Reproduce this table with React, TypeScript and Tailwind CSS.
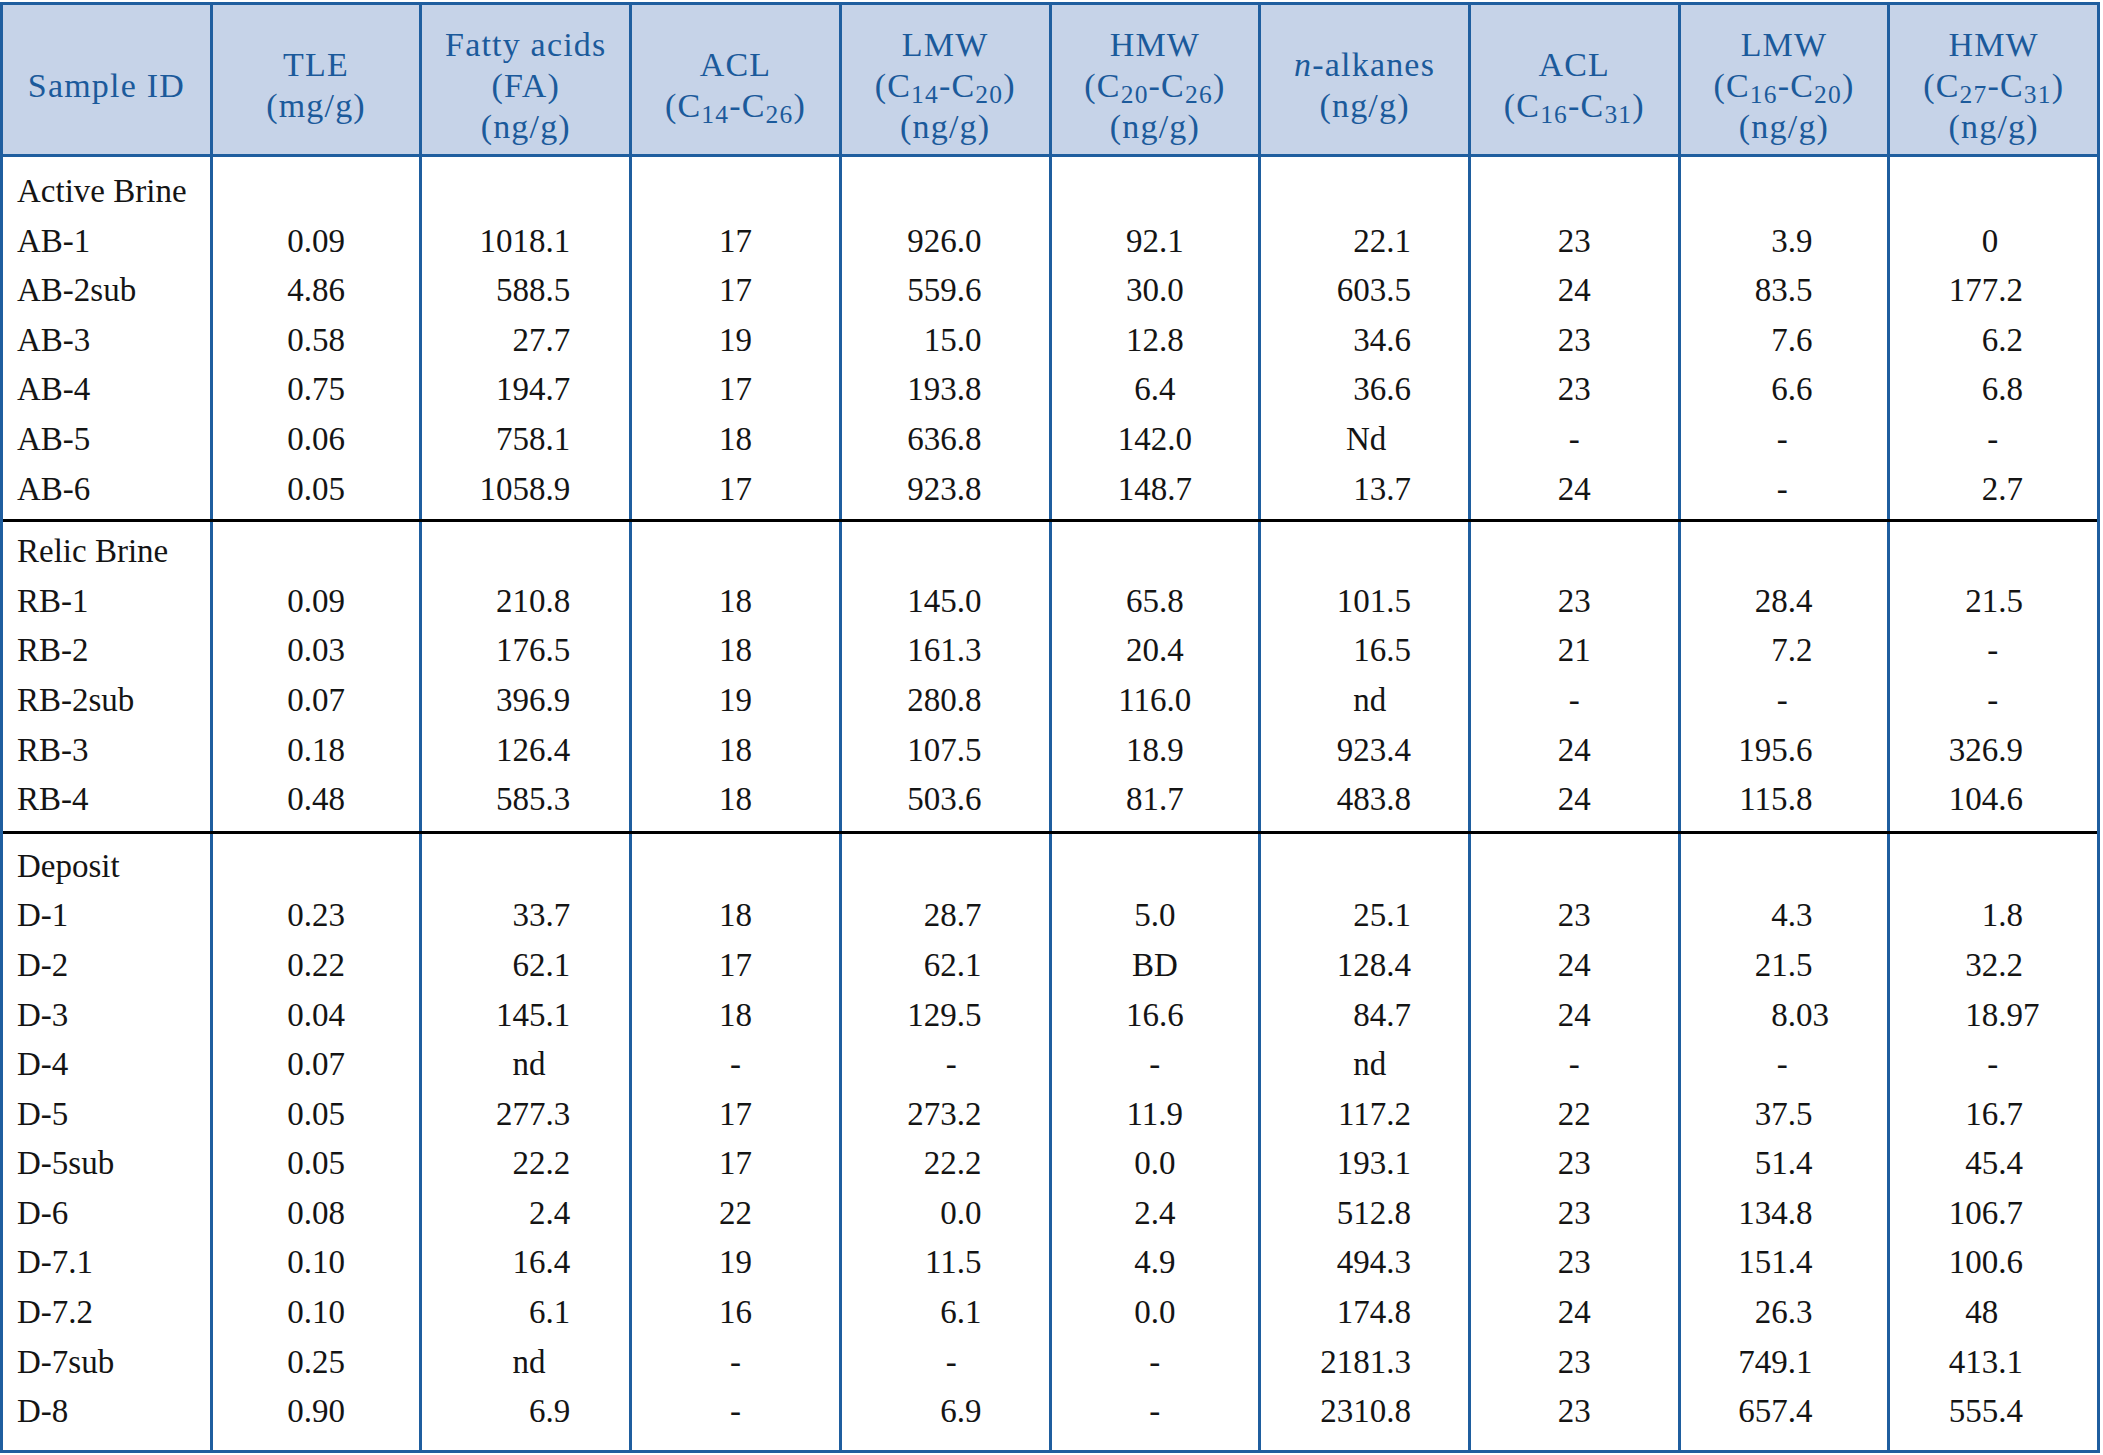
import React from 'react';

type Col =
  | { kind: 'left' }
  | { kind: 'center' }
  | { kind: 'dec'; w: string };

const COLS: Col[] = [
  { kind: 'left' },
  { kind: 'center' },
  { kind: 'dec', w: 'w-[123px]' },
  { kind: 'center' },
  { kind: 'dec', w: 'w-[115px]' },
  { kind: 'center' },
  { kind: 'dec', w: 'w-[125px]' },
  { kind: 'center' },
  { kind: 'dec', w: 'w-[107px]' },
  { kind: 'dec', w: 'w-[108px]' },
];

type Group = { label: string; pt: string; pb: string; rows: string[][] };

const GROUPS: Group[] = [
  {
    label: 'Active Brine',
    pt: 'pt-[10px]',
    pb: 'pb-[5px]',
    rows: [
      ['AB-1', '0.09', '1018.1', '17', '926.0', '92.1', '22.1', '23', '3.9', '0'],
      ['AB-2sub', '4.86', '588.5', '17', '559.6', '30.0', '603.5', '24', '83.5', '177.2'],
      ['AB-3', '0.58', '27.7', '19', '15.0', '12.8', '34.6', '23', '7.6', '6.2'],
      ['AB-4', '0.75', '194.7', '17', '193.8', '6.4', '36.6', '23', '6.6', '6.8'],
      ['AB-5', '0.06', '758.1', '18', '636.8', '142.0', 'Nd', '-', '-', '-'],
      ['AB-6', '0.05', '1058.9', '17', '923.8', '148.7', '13.7', '24', '-', '2.7'],
    ],
  },
  {
    label: 'Relic Brine',
    pt: 'pt-[5px]',
    pb: 'pb-[6px]',
    rows: [
      ['RB-1', '0.09', '210.8', '18', '145.0', '65.8', '101.5', '23', '28.4', '21.5'],
      ['RB-2', '0.03', '176.5', '18', '161.3', '20.4', '16.5', '21', '7.2', '-'],
      ['RB-2sub', '0.07', '396.9', '19', '280.8', '116.0', 'nd', '-', '-', '-'],
      ['RB-3', '0.18', '126.4', '18', '107.5', '18.9', '923.4', '24', '195.6', '326.9'],
      ['RB-4', '0.48', '585.3', '18', '503.6', '81.7', '483.8', '24', '115.8', '104.6'],
    ],
  },
  {
    label: 'Deposit',
    pt: 'pt-[8px]',
    pb: 'pb-[13px]',
    rows: [
      ['D-1', '0.23', '33.7', '18', '28.7', '5.0', '25.1', '23', '4.3', '1.8'],
      ['D-2', '0.22', '62.1', '17', '62.1', 'BD', '128.4', '24', '21.5', '32.2'],
      ['D-3', '0.04', '145.1', '18', '129.5', '16.6', '84.7', '24', '8.03', '18.97'],
      ['D-4', '0.07', 'nd', '-', '-', '-', 'nd', '-', '-', '-'],
      ['D-5', '0.05', '277.3', '17', '273.2', '11.9', '117.2', '22', '37.5', '16.7'],
      ['D-5sub', '0.05', '22.2', '17', '22.2', '0.0', '193.1', '23', '51.4', '45.4'],
      ['D-6', '0.08', '2.4', '22', '0.0', '2.4', '512.8', '23', '134.8', '106.7'],
      ['D-7.1', '0.10', '16.4', '19', '11.5', '4.9', '494.3', '23', '151.4', '100.6'],
      ['D-7.2', '0.10', '6.1', '16', '6.1', '0.0', '174.8', '24', '26.3', '48'],
      ['D-7sub', '0.25', 'nd', '-', '-', '-', '2181.3', '23', '749.1', '413.1'],
      ['D-8', '0.90', '6.9', '-', '6.9', '-', '2310.8', '23', '657.4', '555.4'],
    ],
  },
];

const HEADERS: React.ReactNode[][] = [
  ['Sample ID'],
  ['TLE', '(mg/g)'],
  ['Fatty acids', '(FA)', '(ng/g)'],
  ['ACL', <>(C<sub>14</sub>-C<sub>26</sub>)</>],
  ['LMW', <>(C<sub>14</sub>-C<sub>20</sub>)</>, '(ng/g)'],
  ['HMW', <>(C<sub>20</sub>-C<sub>26</sub>)</>, '(ng/g)'],
  [<><i>n</i>-alkanes</>, '(ng/g)'],
  ['ACL', <>(C<sub>16</sub>-C<sub>31</sub>)</>],
  ['LMW', <>(C<sub>16</sub>-C<sub>20</sub>)</>, '(ng/g)'],
  ['HMW', <>(C<sub>27</sub>-C<sub>31</sub>)</>, '(ng/g)'],
];

function Cell({ col, value }: { col: Col; value: string }) {
  if (col.kind === 'left') {
    return <div className="h-[49.6px] leading-[49.6px] pl-[14px] whitespace-nowrap">{value}</div>;
  }
  if (col.kind === 'center') {
    return <div className="h-[49.6px] leading-[49.6px] text-center whitespace-nowrap">{value}</div>;
  }
  const dot = value.indexOf('.');
  const intPart = dot >= 0 ? value.slice(0, dot) : value;
  const frac = dot >= 0 ? value.slice(dot) : '';
  return (
    <div className="flex h-[49.6px] leading-[49.6px] whitespace-nowrap">
      <span className={`${col.w} shrink-0 text-right`}>{intPart}</span>
      <span>{frac}</span>
    </div>
  );
}

export default function App() {
  return (
    <div className="bg-white w-[2103px] h-[1455px] pt-[2px] font-['Liberation_Serif',serif]">
      <div className="w-[2100px] border-[3px] border-[#1f5e9f]">
        <div className="flex h-[152px] bg-[#c6d3e8] border-b-[3px] border-[#1f5e9f]">
          {HEADERS.map((lines, i) => (
            <div
              key={i}
              className={`flex-1 min-w-0 flex flex-col items-center justify-center pt-[11px] text-[34px] leading-[41px] tracking-[0.035em] text-[#1b5a9b] ${
                i > 0 ? 'border-l-[3px] border-[#1f5e9f]' : ''
              }`}
            >
              {lines.map((l, j) => (
                <div key={j} className="whitespace-nowrap">
                  {l}
                </div>
              ))}
            </div>
          ))}
        </div>
        {GROUPS.map((g, gi) => (
          <React.Fragment key={gi}>
            {gi > 0 && <div className="h-[3px] bg-black" />}
            <div className="flex text-[33px] text-[#141414]">
              {COLS.map((col, ci) => (
                <div
                  key={ci}
                  className={`flex-1 min-w-0 flex flex-col ${g.pt} ${g.pb} ${
                    ci > 0 ? 'border-l-[3px] border-[#1f5e9f]' : ''
                  }`}
                >
                  <Cell col={col} value={ci === 0 ? g.label : ''} />
                  {g.rows.map((r, ri) => (
                    <Cell key={ri} col={col} value={r[ci]} />
                  ))}
                </div>
              ))}
            </div>
          </React.Fragment>
        ))}
      </div>
    </div>
  );
}
